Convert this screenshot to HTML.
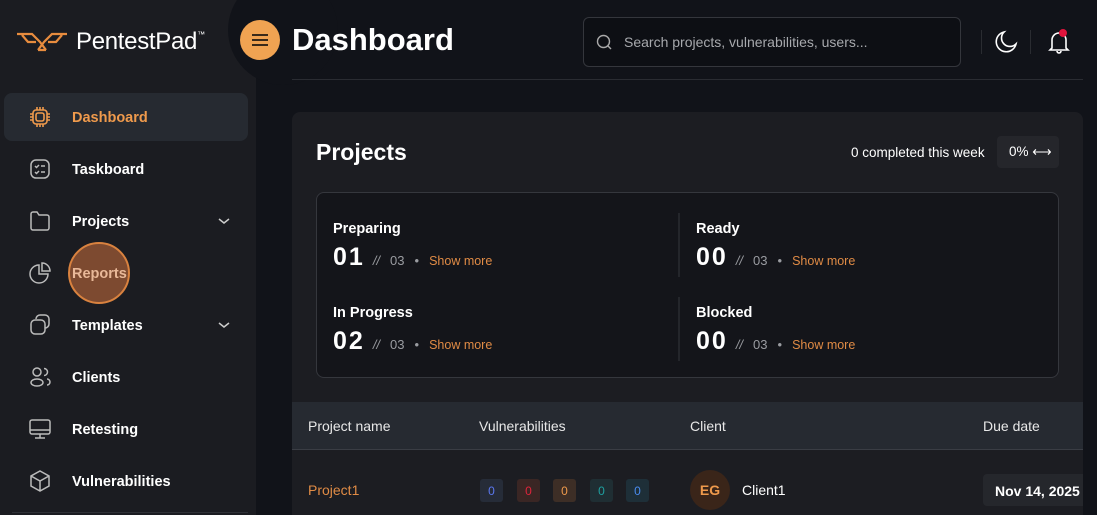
<!DOCTYPE html>
<html><head><meta charset="utf-8"><style>
*{margin:0;padding:0;box-sizing:border-box}
body{width:1097px;height:515px;overflow:hidden;background:#111319;font-family:"Liberation Sans",sans-serif;color:#fff;position:relative}
.sb{position:absolute;left:0;top:0;width:256px;height:515px;background:#1b1c21}
.bump{position:absolute;left:228px;top:-25px;width:110px;height:110px;border-radius:50%;background:#111319}
.logo{position:absolute;left:16px;top:30px}
.logotext{position:absolute;left:76px;top:28px;font-size:24px;color:#fff;letter-spacing:-0.3px}
.logotext sup{font-size:8px;vertical-align:top;position:relative;top:2px}
.nav{position:absolute;left:4px;width:244px;height:48px;border-radius:8px;font-weight:bold;font-size:14.5px}
.nav.act{background:#262a31;color:#ef9a4c}
.nav svg{position:absolute;left:24px;top:12px}
.nav span{position:absolute;left:68px;top:17px}
.nav .chev{position:absolute;left:212px;top:16px}
.reports{position:absolute;left:68px;top:242px;width:62px;height:62px;border-radius:50%;background:#7d4a30;border:2px solid #d9823f}
.ham{position:absolute;left:240px;top:20px;width:40px;height:40px;border-radius:50%;background:#f0a352}
.ham i{position:absolute;left:12px;width:16px;height:2px;background:#3a2a1a}
h1{position:absolute;left:292px;top:22px;font-size:31px;font-weight:bold}
.search{position:absolute;left:583px;top:17px;width:378px;height:50px;border:1px solid #34363c;border-radius:6px;background:#0d0f14}
.search span{position:absolute;left:40px;top:16px;font-size:14px;color:#a7a9ad}
.vl{position:absolute;top:30px;width:1px;height:24px;background:#2a2c31}
.hl{position:absolute;left:292px;top:79px;width:791px;height:1px;background:#2a2c32}
.card{position:absolute;left:292px;top:112px;width:791px;height:403px;background:#1c1d22;border-radius:8px 8px 0 0;overflow:hidden}
.card h2{position:absolute;left:24px;top:27px;font-size:23px;font-weight:bold}
.comp{position:absolute;left:559px;top:33px;font-size:13.5px}
.pct{position:absolute;left:705px;top:24px;width:62px;height:32px;background:#25262b;border-radius:4px;font-size:13.5px;padding:8px 0 0 12px}
.box{position:absolute;left:24px;top:80px;width:743px;height:186px;background:#14151a;border:1px solid #35373d;border-radius:8px}
.st{position:absolute;white-space:nowrap}
.st b{display:block;font-size:14.5px}
.st .n{font-size:25px;font-weight:900;margin-top:6px;display:inline-block;letter-spacing:2px}
.st .r{font-size:13px;color:#9a9ca1;margin-left:8px}
.st .r i{margin-right:10px}
.st .d{margin:0 10px}
.st .sm{font-size:12.5px;color:#e08b45}
.vd{position:absolute;left:361px;width:2px;height:64px;background:#24262b}
.th{position:absolute;left:0;top:290px;width:791px;height:48px;background:#262a31;border-bottom:1px solid #3a3d44;font-size:14px;color:#e8e8e8}
.th span{position:absolute;top:16px}
.row{position:absolute;left:0;top:339px;width:791px;height:64px;font-size:14px}
.badge{position:absolute;top:28px;width:23px;height:23px;border-radius:3px;font-size:12px;text-align:center;padding-top:5px}
.av{position:absolute;left:398px;top:19px;width:40px;height:40px;border-radius:50%;background:#3a2519;color:#ef9a4c;font-size:14px;font-weight:bold;text-align:center;padding-top:12px}
.date{position:absolute;left:691px;top:23px;width:110px;height:32px;background:#25272c;border-radius:4px;padding:9px 0 0 12px;font-size:14px;font-weight:bold}
</style></head><body>
<div class="sb"></div>
<div style="position:absolute;left:12px;top:512px;width:236px;height:1px;background:#2e3036"></div>
<div class="bump"></div>
<svg class="logo" width="52" height="22" viewBox="0 0 52 22" fill="none" stroke="#e88c3e" stroke-width="2.2"><path d="M1 4 H16 L24 12 L30 20 M51 4 H36 L28 12 L22 20 M6 5 L12 12 H20 M46 5 L40 12 H32 M22 20 H30"/></svg>
<div class="logotext">PentestPad<sup>™</sup></div>

<div class="nav act" style="top:93px"><svg width="24" height="24" viewBox="0 0 24 24" fill="none" stroke="#ef9a4c" stroke-width="1.6"><rect x="5" y="5" width="14" height="14" rx="3"/><rect x="8" y="8" width="8" height="8" rx="2"/><path d="M9 2v3M12 2v3M15 2v3M9 19v3M12 19v3M15 19v3M2 9h3M2 12h3M2 15h3M19 9h3M19 12h3M19 15h3"/></svg><span>Dashboard</span></div>
<div class="nav" style="top:145px"><svg width="24" height="24" viewBox="0 0 24 24" fill="none" stroke="#bbb" stroke-width="1.5"><rect x="3" y="3" width="18" height="18" rx="5"/><path d="M7 9l1.5 1.5L11 8M13 9h4M7 15l1.5 1.5L11 14M13 15h4"/></svg><span>Taskboard</span></div>
<div class="nav" style="top:197px"><svg width="24" height="24" viewBox="0 0 24 24" fill="none" stroke="#bbb" stroke-width="1.5"><path d="M3 5a2 2 0 0 1 2-2h4l2 3h8a2 2 0 0 1 2 2v11a2 2 0 0 1-2 2H5a2 2 0 0 1-2-2z"/></svg><span>Projects</span><svg class="chev" width="16" height="16" viewBox="0 0 16 16" fill="none" stroke="#ccc" stroke-width="1.5"><path d="M3 6l5 4 5-4"/></svg></div>
<div class="nav" style="top:249px"><svg width="24" height="24" viewBox="0 0 24 24" fill="none" stroke="#bbb" stroke-width="1.5"><path d="M11 4a9 9 0 1 0 9 9h-9z"/><path d="M14 2a8 8 0 0 1 8 8h-8z"/></svg></div>
<div class="reports"></div>
<div class="nav" style="top:249px;color:#e8b898"><span>Reports</span></div>
<div class="nav" style="top:301px"><svg width="24" height="24" viewBox="0 0 24 24" fill="none" stroke="#bbb" stroke-width="1.5"><rect x="3" y="7" width="14" height="14" rx="4"/><path d="M8 6a4 4 0 0 1 4-4h5a4 4 0 0 1 4 4v5a4 4 0 0 1-4 4"/></svg><span>Templates</span><svg class="chev" width="16" height="16" viewBox="0 0 16 16" fill="none" stroke="#ccc" stroke-width="1.5"><path d="M3 6l5 4 5-4"/></svg></div>
<div class="nav" style="top:353px"><svg width="24" height="24" viewBox="0 0 24 24" fill="none" stroke="#bbb" stroke-width="1.5"><circle cx="9" cy="7" r="4"/><ellipse cx="9" cy="17.5" rx="6" ry="3.5"/><path d="M16 3.5a3.5 3.5 0 0 1 0 7M19 14a3 3 0 0 1 0 6"/></svg><span>Clients</span></div>
<div class="nav" style="top:405px"><svg width="24" height="24" viewBox="0 0 24 24" fill="none" stroke="#bbb" stroke-width="1.5"><rect x="2" y="3" width="20" height="14" rx="2"/><path d="M2 13h20M12 17v4M7 21h10"/></svg><span>Retesting</span></div>
<div class="nav" style="top:457px"><svg width="24" height="24" viewBox="0 0 24 24" fill="none" stroke="#bbb" stroke-width="1.5"><path d="M12 2l9 5v10l-9 5-9-5V7z M3 7l9 5 9-5M12 12v10"/></svg><span>Vulnerabilities</span></div>

<div class="ham"><i style="top:14px"></i><i style="top:19px"></i><i style="top:24px"></i></div>
<h1>Dashboard</h1>
<div class="search"><svg style="position:absolute;left:12px;top:16px" width="17" height="17" viewBox="0 0 17 17" fill="none" stroke="#aaa" stroke-width="1.4"><circle cx="7.5" cy="7.5" r="6"/><path d="M12 12l3 3"/></svg><span>Search projects, vulnerabilities, users...</span></div>
<div class="vl" style="left:981px"></div><div class="vl" style="left:1030px"></div>
<svg style="position:absolute;left:994px;top:30px" width="24" height="24" viewBox="0 0 24 24" fill="none" stroke="#fff" stroke-width="1.6"><path d="M10 2a10 10 0 1 0 12 12A8 8 0 0 1 10 2z"/></svg>
<svg style="position:absolute;left:1047px;top:29px" width="24" height="26" viewBox="0 0 24 26" fill="none" stroke="#fff" stroke-width="1.6"><path d="M5 19V11a7 7 0 0 1 14 0v8l2 2H3z M10 22a2 2 0 0 0 4 0"/></svg>
<div style="position:absolute;left:1059px;top:29px;width:8px;height:8px;border-radius:50%;background:#e0143c"></div>
<div class="hl"></div>

<div class="card">
<h2>Projects</h2>
<div class="comp">0 completed this week</div>
<div class="pct">0% ⟷</div>
<div class="box">
 <div class="st" style="left:16px;top:28px"><b>Preparing</b><span class="n">01</span><span class="r"><i>//</i>03<span class="d">•</span></span><span class="sm">Show more</span></div>
 <div class="st" style="left:379px;top:28px"><b>Ready</b><span class="n">00</span><span class="r"><i>//</i>03<span class="d">•</span></span><span class="sm">Show more</span></div>
 <div class="st" style="left:16px;top:112px"><b>In Progress</b><span class="n">02</span><span class="r"><i>//</i>03<span class="d">•</span></span><span class="sm">Show more</span></div>
 <div class="st" style="left:379px;top:112px"><b>Blocked</b><span class="n">00</span><span class="r"><i>//</i>03<span class="d">•</span></span><span class="sm">Show more</span></div>
 <div class="vd" style="top:20px"></div><div class="vd" style="top:104px"></div>
</div>
<div class="th"><span style="left:16px">Project name</span><span style="left:187px">Vulnerabilities</span><span style="left:398px">Client</span><span style="left:691px">Due date</span></div>
<div class="row">
 <span style="position:absolute;left:16px;top:31px;color:#e08b45">Project1</span>
 <div class="badge" style="left:188px;background:#262c38;color:#5b78f0">0</div>
 <div class="badge" style="left:225px;background:#3a2624;color:#e0243c">0</div>
 <div class="badge" style="left:261px;background:#3d2e26;color:#ef9a4c">0</div>
 <div class="badge" style="left:298px;background:#1f2e33;color:#1fa0a0">0</div>
 <div class="badge" style="left:334px;background:#1e2f38;color:#4a8cf0">0</div>
 <div class="av">EG</div>
 <span style="position:absolute;left:450px;top:31px">Client1</span>
 <div class="date">Nov 14, 2025</div>
</div>
</div>
</body></html>
